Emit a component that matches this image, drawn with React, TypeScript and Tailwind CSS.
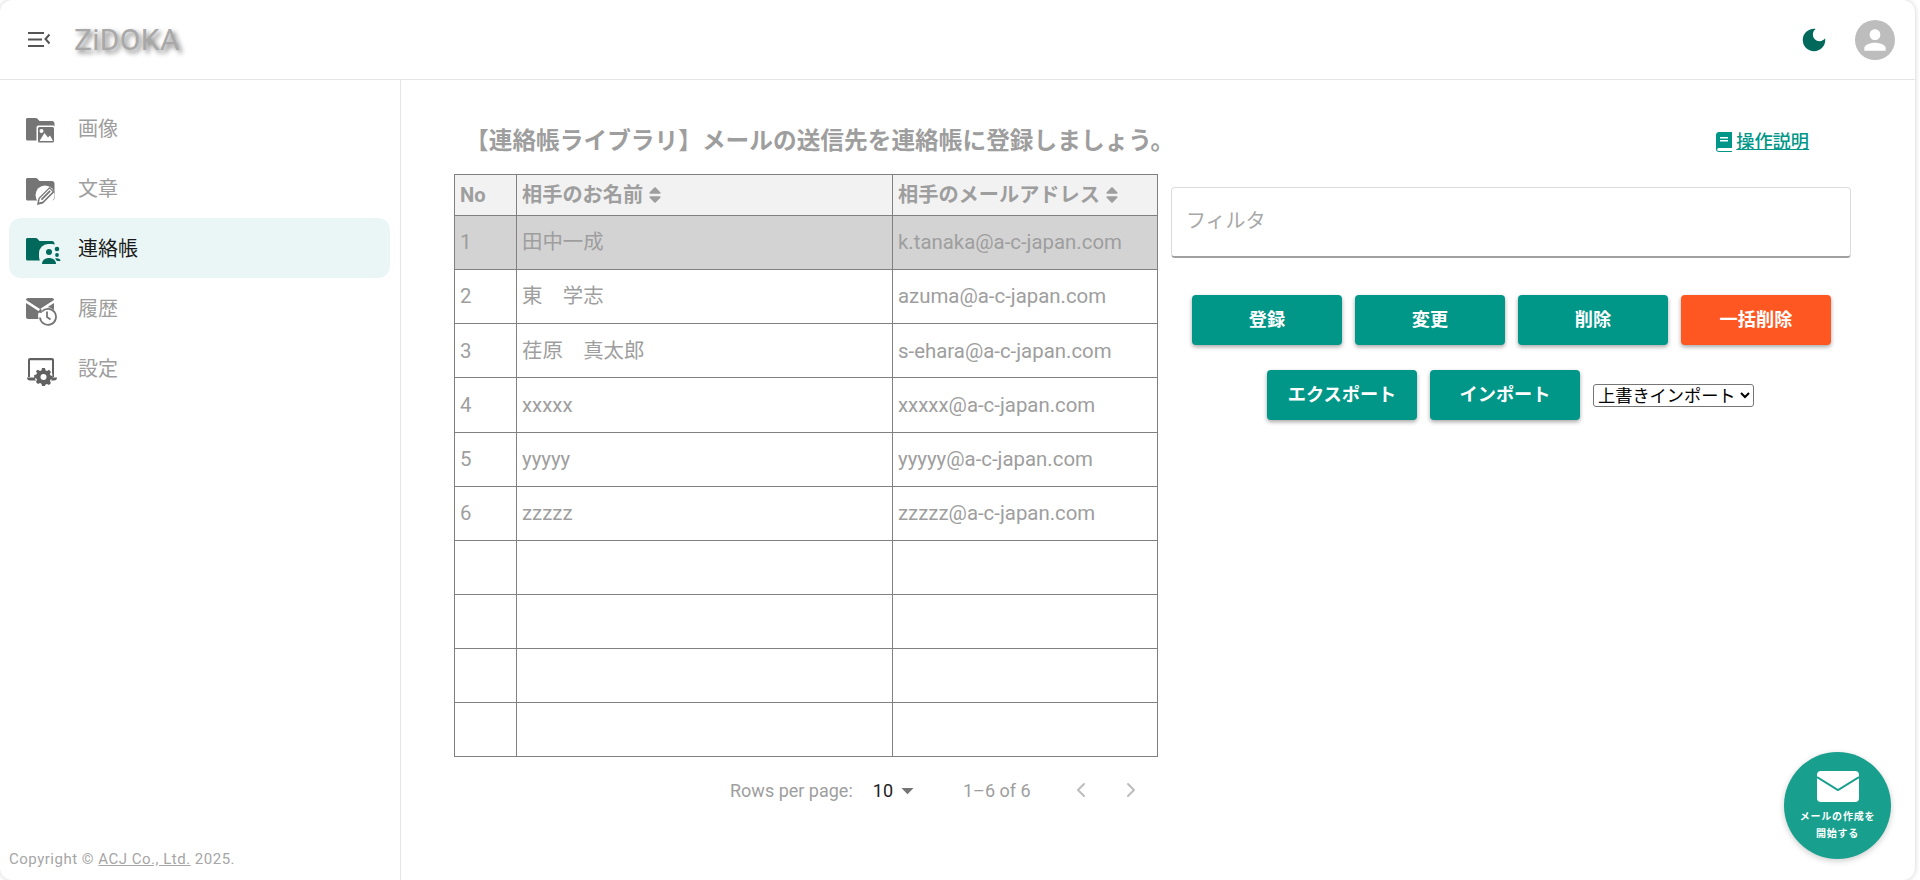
import React from "react";
import { ChevronLeft, ChevronRight } from "lucide-react";
import { FaSort } from "react-icons/fa";

const FOLDER = "M1.5 0h8.2c.6 0 1.1.2 1.5.6L13.5 3H26c1.4 0 2.5 1.1 2.5 2.5V20c0 1.4-1.1 2.5-2.5 2.5H1.5C.7 22.500 0 21.800 0 21V1.500C0 .7.700 0 1.500 0z";

function NavFolder({ color, cut, kind }: { color: string; cut: string; kind: "image" | "pen" | "people" }) {
  return (
    <svg width="36" height="28" viewBox="0 0 36 28" className="shrink-0 mt-[8px]">
      <path d={FOLDER} fill={color} />
      {kind === "image" && (
        <g>
          <rect x="10.500" y="7.500" width="18.500" height="18.500" rx="2" fill={cut} />
          <rect x="12" y="9" width="16" height="15.500" rx="1.500" fill={color} />
          <circle cx="15.500" cy="13" r="2" fill={cut} />
          <path d="M13.500 23l5-8 3.500 4.500 2-2 3 5.500z" fill={cut} />
        </g>
      )}
      {kind === "pen" && (
        <g>
          <circle cx="19" cy="17" r="9.500" fill={cut} />
          <path d="M11 27l1.500-7L23.500 9l5 5L17 25.500z" fill={color} />
          <path d="M13.800 20.500l9.700-9.700 3 3-9.700 9.700-3.800 1z" fill={cut} />
          <path d="M14.800 21l8.700-8.700 1.300 1.300-8.700 8.700z" fill={color} />
        </g>
      )}
      {kind === "people" && (
        <g>
          <rect x="13" y="6" width="22" height="22" rx="9" fill={cut} />
          <circle cx="23" cy="14" r="3" fill={color} />
          <circle cx="31" cy="11" r="2.300" fill={color} />
          <circle cx="31" cy="17" r="1.900" fill={color} />
          <path d="M16 26c0-4 3.500-6 7-6s7 2 7 6z" fill={color} />
          <path d="M29 20.500c2.500-.8 5.500.2 5.500 2.500H31z" fill={color} />
        </g>
      )}
    </svg>
  );
}

function MailHistoryIcon() {
  return (
    <svg width="36" height="28" viewBox="0 0 36 28" className="shrink-0 mt-[8px]">
      <path d="M2 0h24c1.100 0 2 .9 2 2L14 11 0 2c0-1.100.9-2 2-2z" fill="#757575" />
      <path d="M0 5l14 9 14-9v14c0 1.100-.9 2-2 2H2c-1.100 0-2-.9-2-2z" fill="#757575" />
      <circle cx="21" cy="18" r="9" fill="#fff" />
      <path d="M16 13.500a8 8 0 1 1-2 6" fill="none" stroke="#757575" strokeWidth="1.800" />
      <path d="M15 10l1 5 -4.500-.5z" fill="#757575" />
      <path d="M21 13.500V19l3.500 2.500" fill="none" stroke="#757575" strokeWidth="1.800" />
    </svg>
  );
}

function LaptopGearIcon() {
  return (
    <svg width="36" height="28" viewBox="0 0 36 28" className="shrink-0 mt-[8px]">
      <path d="M4 0h22c1.200 0 2 .9 2 2v17h-2V2.200H4V19H2V2c0-1.100.9-2 2-2z" fill="#616161" />
      <path d="M1 19.500h30c0 1.800-1.200 3-3 3H4c-1.800 0-3-1.200-3-3z" fill="#616161" />
      <circle cx="17.500" cy="18" r="9" fill="#fff" />
      <path d="M16 10h3l.5 2.200 1.500.7 2-1.100 2 2.100-1.100 1.900.6 1.600 2.200.5v3l-2.200.5-.6 1.600 1.100 1.900-2 2.100-2-1.100-1.500.7L19 28h-3l-.5-2.300-1.500-.7-2 1.100-2.100-2.100 1.100-1.900-.6-1.600-2.200-.5v-3l2.200-.5.6-1.600-1.100-1.900L12 11.800l2 1.100 1.500-.7z" fill="#616161" />
      <circle cx="17.500" cy="19" r="3" fill="#fff" />
    </svg>
  );
}

const navItems: { label: string; icon: React.ReactNode; active?: boolean }[] = [
  { label: "画像", icon: <NavFolder color="#757575" cut="#ffffff" kind="image" /> },
  { label: "文章", icon: <NavFolder color="#757575" cut="#ffffff" kind="pen" /> },
  { label: "連絡帳", active: true, icon: <NavFolder color="#00695c" cut="#eaf6f6" kind="people" /> },
  { label: "履歴", icon: <MailHistoryIcon /> },
  { label: "設定", icon: <LaptopGearIcon /> },
];

const rows = [
  ["1", "田中一成", "k.tanaka@a-c-japan.com"],
  ["2", "東　学志", "azuma@a-c-japan.com"],
  ["3", "荏原　真太郎", "s-ehara@a-c-japan.com"],
  ["4", "xxxxx", "xxxxx@a-c-japan.com"],
  ["5", "yyyyy", "yyyyy@a-c-japan.com"],
  ["6", "zzzzz", "zzzzz@a-c-japan.com"],
  ["", "", ""],
  ["", "", ""],
  ["", "", ""],
  ["", "", ""],
];

function Btn({ label, orange }: { label: string; orange?: boolean }) {
  return (
    <button
      className={`w-[150px] h-[50px] rounded text-white font-bold text-[18.200px] shadow-[0_2px_4px_rgba(0,0,0,0.35)] ${
        orange ? "bg-[#ff5722]" : "bg-[#009688]"
      }`}
    >
      {label}
    </button>
  );
}

export default function App() {
  return (
    <div className="w-[1920px] h-[880px] bg-white overflow-hidden font-['Roboto','Noto_Sans_CJK_JP',sans-serif]">
      <div className="w-[1915px] h-[880px] rounded-[12px] bg-white shadow-[0_0_5px_rgba(0,0,0,0.2)] flex flex-col overflow-hidden">
        <header className="h-[80px] shrink-0 border-b border-[#e5e5e5] flex items-center pl-[28px] pr-[20px]">
          <svg width="22" height="16" viewBox="0 0 22 16" className="shrink-0">
            <path d="M0 1h16M0 7.500h14M0 14h16" stroke="#555" strokeWidth="2" fill="none" />
            <path d="M21.500 2.500L17.500 7l4 4.500" stroke="#555" strokeWidth="2" fill="none" />
          </svg>
          <div className="ml-[24px] text-[30px] leading-none tracking-[0.3px] text-[#a8a8a8] [text-shadow:3px_3px_5px_#777]">
            ZiDOKA
          </div>
          <div className="ml-auto flex items-center gap-[26px]">
            <svg width="30" height="30" viewBox="0 0 24 24" fill="#00695c">
              <path d="M12 3c-4.970 0-9 4.030-9 9s4.030 9 9 9 9-4.030 9-9c0-.46-.04-.92-.1-1.360-.98 1.370-2.580 2.260-4.400 2.260-2.980 0-5.400-2.420-5.400-5.400 0-1.810.89-3.420 2.260-4.400-.44-.06-.9-.1-1.360-.1z" />
            </svg>
            <div className="w-[40px] h-[40px] rounded-full bg-[#bdbdbd] flex items-center justify-center">
              <svg width="32" height="32" viewBox="0 0 24 24" fill="#fff">
                <path d="M12 12c2.210 0 4-1.790 4-4s-1.790-4-4-4-4 1.790-4 4 1.790 4 4 4zm0 2c-2.670 0-8 1.340-8 4v2h16v-2c0-2.660-5.330-4-8-4z" />
              </svg>
            </div>
          </div>
        </header>
        <div className="flex-1 flex min-h-0">
          <aside className="w-[401px] shrink-0 border-r border-[#e5e5e5] flex flex-col pl-[9px] pr-[10px] pt-[18px] pb-[10px]">
            <nav className="flex flex-col">
              {navItems.map((n) => (
                <div
                  key={n.label}
                  className={`h-[60px] rounded-[12px] flex items-center pl-[17px] gap-[16px] text-[20px] ${
                    n.active ? "bg-[#eaf6f6] text-[#1a1a1a]" : "text-[#9e9e9e]"
                  }`}
                >
                  {n.icon}
                  <span className="pt-[2px]">{n.label}</span>
                </div>
              ))}
            </nav>
            <div className="mt-auto text-[15px] tracking-[0.5px] text-[#a6a6a6]">
              Copyright © <span className="underline">ACJ Co., Ltd.</span> 2025.
            </div>
          </aside>
          <main className="flex-1 min-w-0 relative pl-[53px] pt-[45px]">
            <div className="flex items-center h-[34px] pl-[11px] w-[1355px]">
              <h1 className="text-[23.700px] font-bold text-[#9e9e9e] whitespace-nowrap">
                【連絡帳ライブラリ】メールの送信先を連絡帳に登録しましょう。
              </h1>
              <a className="ml-auto flex items-center gap-[4px] text-[18.200px] font-medium text-[#009688] underline">
                <svg width="16" height="20" viewBox="0 0 16 20">
                  <path d="M3 0h13v16H3c-1 0-1.800.5-1.800 1.500S2 19 3 19h13v1H3c-1.700 0-3-1.200-3-3V3c0-1.700 1.300-3 3-3z" fill="#009688" />
                  <path d="M4 5h8v1.400H4zM4 8h8v1.400H4z" fill="#fff" />
                </svg>
                操作説明
              </a>
            </div>
            <div className="flex mt-[15px]">
              <div className="w-[704px] shrink-0">
                <table className="w-[703px] table-fixed border-collapse border border-[#808080] text-[20.400px] text-[#9e9e9e]">
                  <colgroup>
                    <col className="w-[62px]" />
                    <col className="w-[376px]" />
                    <col className="w-[265px]" />
                  </colgroup>
                  <thead>
                    <tr className="h-[41px] bg-[#f2f2f2] text-[20.200px]">
                      <th className="border border-[#808080] px-[5px] text-left font-bold">No</th>
                      <th className="border border-[#808080] px-[5px] text-left font-bold">
                        <span className="flex items-center gap-[2px]">相手のお名前<FaSort className="text-[20px]" /></span>
                      </th>
                      <th className="border border-[#808080] px-[5px] text-left font-bold">
                        <span className="flex items-center gap-[2px] whitespace-nowrap">相手のメールアドレス<FaSort className="text-[20px]" /></span>
                      </th>
                    </tr>
                  </thead>
                  <tbody>
                    {rows.map((r, i) => (
                      <tr key={i} className={`h-[54.150px] ${i === 0 ? "bg-[#d3d3d3]" : ""}`}>
                        <td className="border border-[#808080] px-[5px]">{r[0]}</td>
                        <td className="border border-[#808080] px-[5px]">{r[1]}</td>
                        <td className="border border-[#808080] px-[5px] whitespace-nowrap">{r[2]}</td>
                      </tr>
                    ))}
                  </tbody>
                </table>
                <div className="flex items-center h-[66px] text-[18px] text-[#9e9e9e] pl-[276px]">
                  <span>Rows per page:</span>
                  <span className="ml-[20px] text-[#212121]">10</span>
                  <svg width="29" height="29" viewBox="0 0 24 24" fill="#757575">
                    <path d="M7 10l5 5 5-5z" />
                  </svg>
                  <span className="ml-[41px]">1–6 of 6</span>
                  <ChevronLeft className="ml-[38px] text-[#bdbdbd]" size={24} strokeWidth={2} />
                  <ChevronRight className="ml-[26px] text-[#bdbdbd]" size={24} strokeWidth={2} />
                </div>
              </div>
              <div className="ml-[13px] w-[680px] mt-[13px]">
                <div className="h-[71px] rounded-[4px] border border-[#dcdcdc] border-b-[2px] border-b-[#a0a0a0] flex items-center pl-[14px] pb-[2px] text-[20px] text-[#a8a8a8]">
                  フィルタ
                </div>
                <div className="flex justify-start gap-[13px] pl-[21px] mt-[37px]">
                  <Btn label="登録" />
                  <Btn label="変更" />
                  <Btn label="削除" />
                  <Btn label="一括削除" orange />
                </div>
                <div className="flex items-center gap-[13px] pl-[96px] mt-[25px]">
                  <Btn label="エクスポート" />
                  <Btn label="インポート" />
                  <select className="w-[161px] h-[23px] text-[17.200px] text-black bg-white border border-[#767676] rounded-[3px] appearance-auto">
                    <option>上書きインポート</option>
                  </select>
                </div>
              </div>
            </div>
            <div className="absolute left-[1383px] top-[672px] w-[107px] h-[107px] rounded-full bg-[#199f8e] shadow-[0_2px_6px_rgba(0,0,0,0.2)] flex flex-col items-center pt-[19px] text-white font-bold text-[10px] tracking-[0.8px]">
              <svg width="42" height="31" viewBox="0 0 42 31">
                <rect width="42" height="31" rx="4" fill="#fff" />
                <path d="M0 6l21 13L42 6" fill="none" stroke="#199f8e" strokeWidth="2" />
              </svg>
              <span className="mt-[6px] leading-[17px]">メールの作成を</span>
              <span className="leading-[17px]">開始する</span>
            </div>
          </main>
        </div>
      </div>
    </div>
  );
}
